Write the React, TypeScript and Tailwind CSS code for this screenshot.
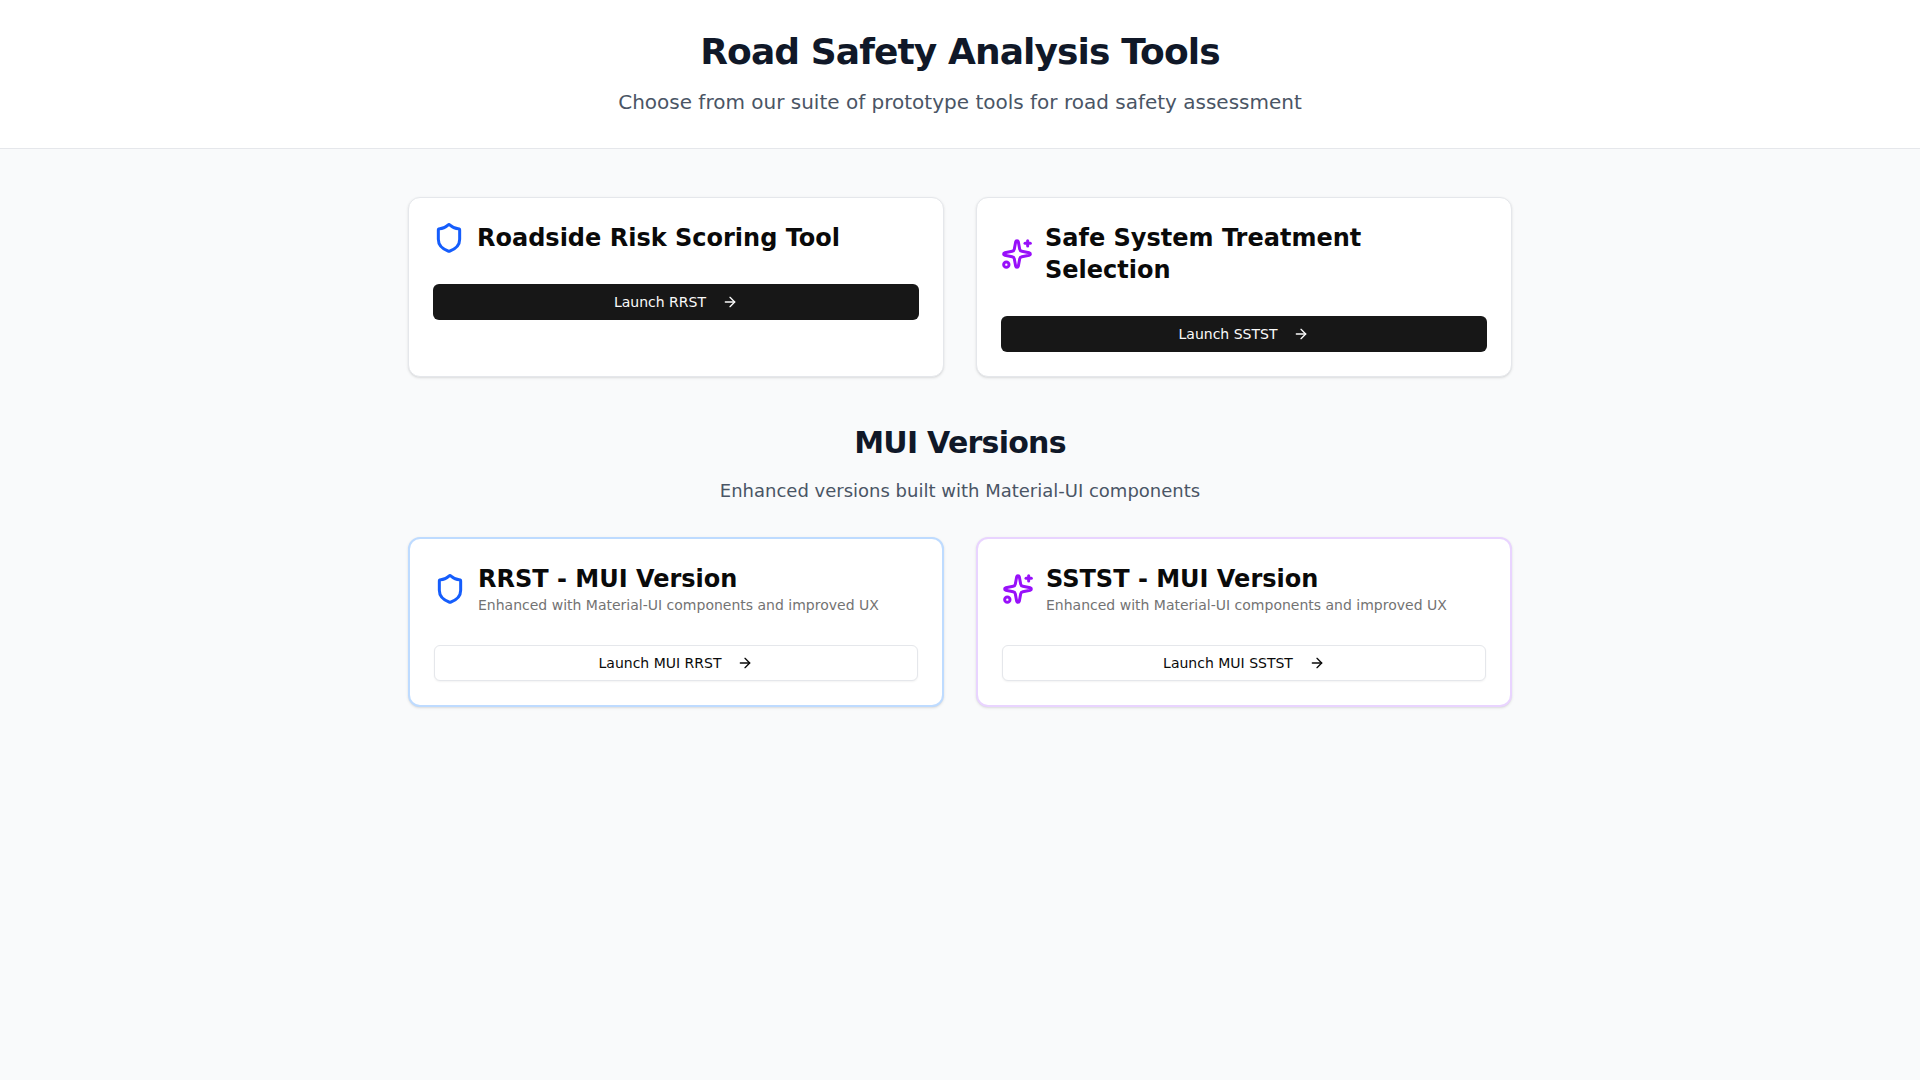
import { ArrowRight, Shield, Sparkles } from "lucide-react";

const font = "font-['DejaVu_Sans',sans-serif]";

export default function App() {
    return (
        <div className={`min-h-screen bg-gray-50 ${font}`}>
            <header className="border-b border-gray-200 bg-white py-8 text-center">
                <h1 className="mb-4 text-4xl font-bold tracking-tight text-gray-900">Road Safety Analysis Tools</h1>
                <p className="text-xl text-gray-600">Choose from our suite of prototype tools for road safety assessment</p>
            </header>

            <main className="mx-auto max-w-6xl px-6 py-12">
                <div className="grid grid-cols-2 gap-8">
                    <div className="rounded-xl border border-gray-200 bg-white p-6 shadow-sm">
                        <div className="mb-[30px] flex items-center gap-3">
                            <Shield strokeWidth={2.25} className="size-8 shrink-0 text-blue-600" />
                            <h3 className="text-2xl font-bold text-neutral-950">Roadside Risk Scoring Tool</h3>
                        </div>
                        <button className="flex h-9 w-full items-center justify-center gap-4 rounded-md bg-neutral-900 text-sm text-neutral-50">
                            Launch RRST
                            <ArrowRight className="size-4" />
                        </button>
                    </div>
                    <div className="rounded-xl border border-gray-200 bg-white p-6 shadow-sm">
                        <div className="mb-[30px] flex items-center gap-3">
                            <Sparkles strokeWidth={2.25} className="size-8 shrink-0 text-purple-600" />
                            <h3 className="text-2xl font-bold text-neutral-950">Safe System Treatment Selection</h3>
                        </div>
                        <button className="flex h-9 w-full items-center justify-center gap-4 rounded-md bg-neutral-900 text-sm text-neutral-50">
                            Launch SSTST
                            <ArrowRight className="size-4" />
                        </button>
                    </div>
                </div>

                <div className="mt-12 text-center">
                    <h2 className="mb-4 text-3xl font-bold tracking-tight text-gray-900">MUI Versions</h2>
                    <p className="text-lg text-gray-600">Enhanced versions built with Material-UI components</p>
                </div>

                <div className="mt-8 grid grid-cols-2 gap-8">
                    <div className="rounded-xl border-2 border-blue-200 bg-white p-6 shadow-sm">
                        <div className="mb-[30px] flex items-center gap-3">
                            <Shield strokeWidth={2.25} className="size-8 shrink-0 text-blue-600" />
                            <div>
                                <h3 className="text-2xl font-bold text-neutral-950">RRST - MUI Version</h3>
                                <p className="text-sm text-neutral-500">Enhanced with Material-UI components and improved UX</p>
                            </div>
                        </div>
                        <button className="flex h-9 w-full items-center justify-center gap-4 rounded-md border border-gray-200 bg-white text-sm text-neutral-950 shadow-xs">
                            Launch MUI RRST
                            <ArrowRight className="size-4" />
                        </button>
                    </div>
                    <div className="rounded-xl border-2 border-purple-200 bg-white p-6 shadow-sm">
                        <div className="mb-[30px] flex items-center gap-3">
                            <Sparkles strokeWidth={2.25} className="size-8 shrink-0 text-purple-600" />
                            <div>
                                <h3 className="text-2xl font-bold text-neutral-950">SSTST - MUI Version</h3>
                                <p className="text-sm text-neutral-500">Enhanced with Material-UI components and improved UX</p>
                            </div>
                        </div>
                        <button className="flex h-9 w-full items-center justify-center gap-4 rounded-md border border-gray-200 bg-white text-sm text-neutral-950 shadow-xs">
                            Launch MUI SSTST
                            <ArrowRight className="size-4" />
                        </button>
                    </div>
                </div>
            </main>
        </div>
    );
}
